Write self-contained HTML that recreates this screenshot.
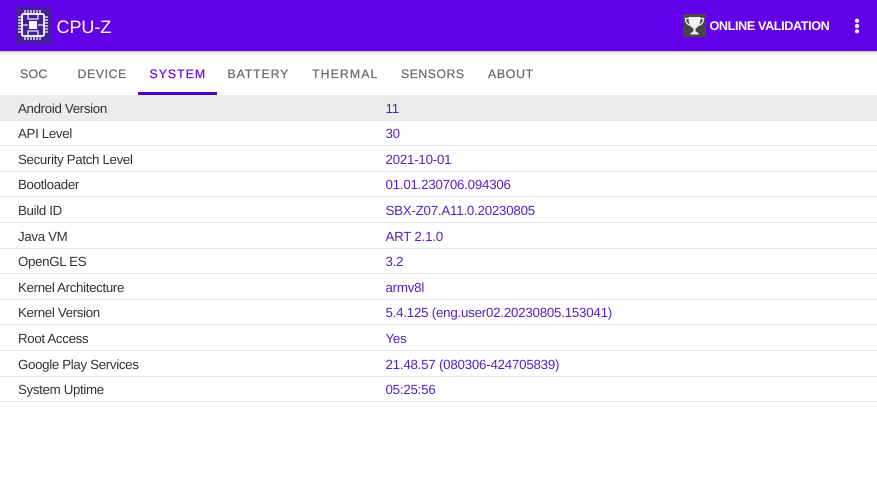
<!DOCTYPE html>
<html><head><meta charset="utf-8">
<style>
html,body{margin:0;padding:0;background:#fff}
#p{position:relative;width:877px;height:493px;overflow:hidden;background:#fff;font-family:"Liberation Sans",sans-serif;text-rendering:geometricPrecision}
#bar{position:absolute;left:0;top:0;width:877px;height:51px;background:#6200ea}
#sh{position:absolute;left:0;top:51px;width:877px;height:4px;background:linear-gradient(#c4c4c4,#f4f4f4 60%,#fff)}
.t{position:absolute;white-space:nowrap}
.tab{top:66px;font-size:12.3px;line-height:16px;color:#666;-webkit-text-stroke:.2px #666}
.row{position:absolute;left:0;width:877px;height:24.6px;border-bottom:1px solid #e6e6e6}
.l{position:absolute;left:18px;top:4.5px;font-size:13.3px;line-height:17px;letter-spacing:-.33px;color:#333;white-space:nowrap}
.v{position:absolute;left:385.5px;top:4.5px;font-size:13.3px;line-height:17px;letter-spacing:-.22px;color:#5322c4;white-space:nowrap}
</style></head><body>
<div id="p">
<div id="bar"></div><div id="sh"></div>
<svg style="position:absolute;left:15px;top:7px" width="36" height="37" viewBox="0 0 36 37">
<rect width="36" height="37" fill="#45209a"/>
<g fill="none" stroke="#efe9f8">
<rect x="7" y="7" width="22" height="22" rx="1.500" stroke-width="2"/>
<path d="M13 7V12H23V7M13 29V24H23V29M7 18H13M23 18H29" stroke-width="1.300"/>
<path d="M10 3v3M13 3v3M16 3v3M19 3v3M22 3v3M25 3v3M10 30v3M13 30v3M16 30v3M19 30v3M22 30v3M25 30v3M3 10h3M3 13h3M3 16h3M3 19h3M3 22h3M3 25h3M30 10h3M30 13h3M30 16h3M30 19h3M30 22h3M30 25h3" stroke-width="1.500" opacity=".9"/>
</g>
<rect x="14" y="14" width="8" height="8" fill="#fff"/>
</svg>
<div class="t" style="left:56.500px;top:15px;font-size:18px;line-height:24px;letter-spacing:-.05px;color:#fff">CPU-Z</div>
<svg style="position:absolute;left:683px;top:14px" width="23" height="23" viewBox="0 0 23 23">
<rect width="23" height="23" fill="#474747"/>
<path d="M5.500 3H17.500C17.500 9 16 13 12.500 14.500V17C13 18 14.500 18.500 15.500 19V20.500H7.500V19C8.500 18.500 10 18 10.500 17V14.500C7 13 5.500 9 5.500 3Z" fill="#f2f2f2"/>
<path d="M6 4.500H2.500C2.500 8 4 10.500 7.500 11.500M17 4.500H20.500C20.500 8 19 10.500 15.500 11.500" fill="none" stroke="#f2f2f2" stroke-width="1.300"/>
</svg>
<div class="t" style="left:709.500px;top:18px;font-size:12.600px;line-height:16px;color:#fff;font-weight:700;letter-spacing:-.37px">ONLINE VALIDATION</div>
<svg style="position:absolute;left:852px;top:17px" width="10" height="18" viewBox="0 0 10 18"><circle cx="5" cy="3.700" r="2.100" fill="#fff"/><circle cx="5" cy="9" r="2.100" fill="#fff"/><circle cx="5" cy="14.300" r="2.100" fill="#fff"/></svg>

<div class="t tab" style="left:20px;letter-spacing:.3px">SOC</div>
<div class="t tab" style="left:77.500px;letter-spacing:.6px">DEVICE</div>
<div class="t tab" style="left:149.500px;letter-spacing:1px;color:#6200ea;-webkit-text-stroke:.2px #6200ea">SYSTEM</div>
<div class="t tab" style="left:227.500px;letter-spacing:.87px">BATTERY</div>
<div class="t tab" style="left:312px;letter-spacing:1.100px">THERMAL</div>
<div class="t tab" style="left:401px;letter-spacing:.5px">SENSORS</div>
<div class="t tab" style="left:488px;letter-spacing:.7px">ABOUT</div>
<div style="position:absolute;left:137.500px;top:91.500px;width:79px;height:3.500px;background:#4a00c4"></div>

<div class="row" style="top:95px;background:#ececec"><div class="l">Android Version</div><div class="v">11</div></div>
<div class="row" style="top:120.600px"><div class="l">API Level</div><div class="v">30</div></div>
<div class="row" style="top:146.200px"><div class="l">Security Patch Level</div><div class="v">2021-10-01</div></div>
<div class="row" style="top:171.800px"><div class="l">Bootloader</div><div class="v">01.01.230706.094306</div></div>
<div class="row" style="top:197.400px"><div class="l">Build ID</div><div class="v">SBX-Z07.A11.0.20230805</div></div>
<div class="row" style="top:223px"><div class="l">Java VM</div><div class="v">ART 2.1.0</div></div>
<div class="row" style="top:248.600px"><div class="l">OpenGL ES</div><div class="v">3.2</div></div>
<div class="row" style="top:274.200px"><div class="l">Kernel Architecture</div><div class="v">armv8l</div></div>
<div class="row" style="top:299.800px"><div class="l">Kernel Version</div><div class="v">5.4.125 (eng.user02.20230805.153041)</div></div>
<div class="row" style="top:325.400px"><div class="l">Root Access</div><div class="v">Yes</div></div>
<div class="row" style="top:351px"><div class="l">Google Play Services</div><div class="v">21.48.57 (080306-424705839)</div></div>
<div class="row" style="top:376.600px"><div class="l">System Uptime</div><div class="v">05:25:56</div></div>
</div>
</body></html>
